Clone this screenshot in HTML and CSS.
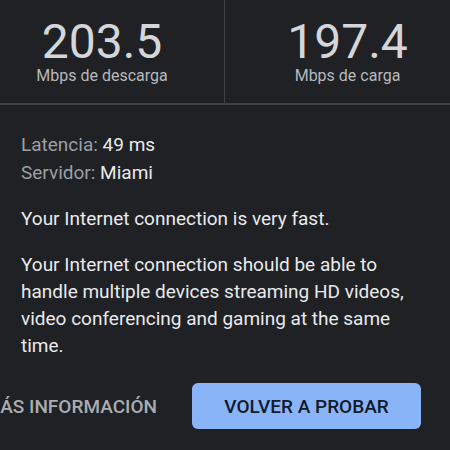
FILE: index.html
```html
<!DOCTYPE html>
<html lang="es">
<head>
<meta charset="utf-8">
<title>Speed test</title>
<link rel="stylesheet" href="styles.css">
</head>
<body>
<div class="screen">
  <div class="stats">
    <div class="stat stat-down">
      <div class="value">203.5</div>
      <div class="unit">Mbps de descarga</div>
    </div>
    <div class="stat">
      <div class="value">197.4</div>
      <div class="unit">Mbps de carga</div>
    </div>
  </div>
  <div class="info">
    <div class="meta"><span class="key">Latencia:</span> <span class="val">49 ms</span></div>
    <div class="meta"><span class="key">Servidor:</span> <span class="val">Miami</span></div>
    <p class="lead">Your Internet connection is very fast.</p>
    <p class="desc">Your Internet connection should be able to handle multiple devices streaming HD videos, video conferencing and gaming at the same time.</p>
  </div>
  <div class="actions">
    <button class="text-btn">MÁS INFORMACIÓN</button>
    <button class="fill-btn">VOLVER A PROBAR</button>
  </div>
</div>
</body>
</html>
```

FILE: styles.css
```css
* { box-sizing: border-box; }
html, body {
  margin: 0;
  padding: 0;
  background: #202124;
  overflow: hidden;
}
body {
  width: 450px;
  height: 450px;
  font-family: Roboto, "Noto Sans", sans-serif;
  color: #e8eaed;
}
.stats {
  display: grid;
  grid-template-columns: 245px 245px;
  width: 490px;
  margin-left: -20px;
  border-bottom: 2px solid #3f4144;
}
.stat {
  text-align: center;
  padding: 18px 0 17px;
}
.stat-down {
  border-right: 1px solid #3f4144;
}
.value {
  font-size: 48px;
  line-height: 48px;
  color: #d4d6d9;
}
.unit {
  font-size: 16px;
  line-height: 20px;
  color: #b6b9bd;
}
.info {
  padding: 26px 21px 0 21px;
}
.meta {
  font-size: 19px;
  line-height: 28px;
}
.key { color: #9aa0a6; }
.val { color: #e8eaed; }
.lead {
  margin: 18px 0 0;
  font-size: 19px;
  line-height: 28px;
}
.desc {
  margin: 18px 0 0;
  font-size: 19px;
  line-height: 27px;
}
.actions {
  display: flex;
  justify-content: flex-end;
  align-items: center;
  gap: 35px;
  padding: 0 29px 0 0;
  margin-top: 24px;
  white-space: nowrap;
}
button {
  font-family: Roboto, "Noto Sans", sans-serif;
  font-weight: 500;
  font-size: 19px;
  border: none;
  cursor: pointer;
}
.text-btn {
  background: none;
  color: #a9adb2;
  padding: 0;
  flex-shrink: 0;
}
.fill-btn {
  flex-shrink: 0;
  width: 229px;
  height: 46px;
  border-radius: 6px;
  background: #8ab4f8;
  color: #111a2b;
  padding: 0;
}
```
